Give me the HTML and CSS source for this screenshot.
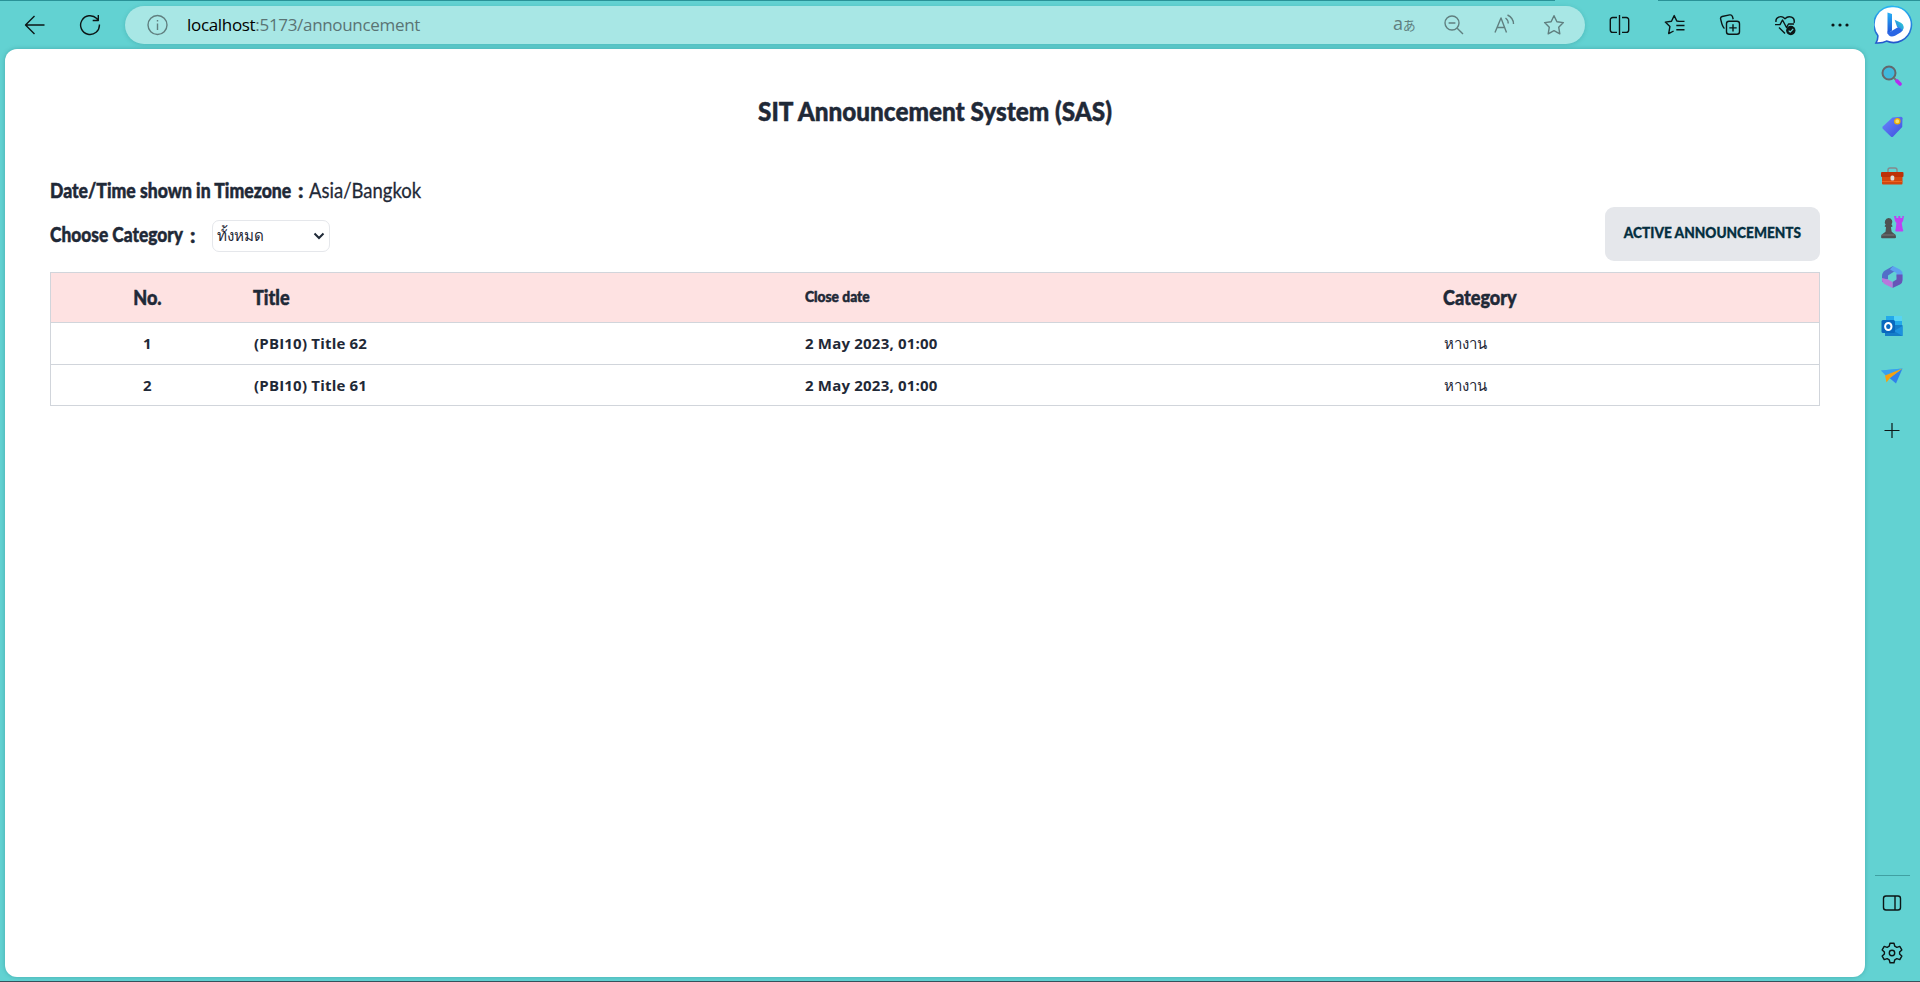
FILE: index.html
```html
<!DOCTYPE html>
<html lang="en">
<head>
<meta charset="utf-8">
<title>SIT Announcement System (SAS)</title>
<link rel="stylesheet" href="styles.css">
</head>
<body>
<div class="browser">
  <header class="toolbar">
    <div class="tab-edge"><i class="edge-left"></i><i class="edge-right"></i></div>
    <svg class="icon back" viewBox="0 0 22 22"><path d="M20.5 11H1.5M10.5 2L1.5 11l9 9"/></svg>
    <svg class="icon reload" viewBox="0 0 22 22"><path d="M20.4 10.5A9.4 9.4 0 1 1 17.8 4.6L19 6M19.3 1v5.5h-5.6"/></svg>
    <div class="address">
      <svg class="icon muted" viewBox="0 0 22 22"><circle cx="11.500" cy="11" r="9.5"/><path d="M11.500 9.5V16M11.500 6v1.6"/></svg>
      <div class="url"><b>localhost</b>:5173/announcement</div>
      <div class="address-actions">
        <div class="translate">a<span>あ</span></div>
        <svg class="icon muted" viewBox="0 0 22 22"><circle cx="9" cy="9" r="7"/><path d="M14.2 14.2l5.8 5.8M5.6 9h6.8"/></svg>
        <svg class="icon muted" viewBox="0 0 22 22"><path d="M2 18.500L8 4l5.500 14.500M4.300 13.500h7.200M12.500 4c2 1.400 2.700 3.200 2.700 5.500M14.500 1c4 2 6 5 6 9"/></svg>
        <svg class="icon muted" viewBox="0 0 22 22"><path d="M11 1.700l2.900 6 6.500.9-4.700 4.600 1.100 6.600L11 16.700l-5.800 3.100 1.100-6.600L1.600 8.600l6.500-.9z"/></svg>
      </div>
    </div>
    <div class="tools">
      <svg class="icon" viewBox="0 0 22 22"><path d="M10.500 1v20M8 3.500H3.700A2.400 2.400 0 0 0 1.300 6v10a2.400 2.400 0 0 0 2.400 2.400H8M13 3.500h4.300A2.400 2.400 0 0 1 19.700 6v10a2.400 2.400 0 0 1-2.400 2.400H13"/></svg>
      <svg class="icon" viewBox="0 0 22 22"><path d="M15 7.400L12.800 7 10.200 1.600 7.500 7.200l-6.200.9 4.600 4.500-1.200 7 4.900-2.600M14 7.400h6.500M12.300 11.500h8.200M12.300 15.700h8.200"/></svg>
      <svg class="icon" viewBox="0 0 22 22"><path d="M5.500 14.500C3 13 2 6 1.500 4.500c0-1.200.7-1.700 1.600-2L10.700.9c1.500-.2 2.300.4 2.700 1.500l.8 2.900"/><rect x="7.500" y="7.300" width="13" height="13" rx="2.500"/><path d="M14 10.200v7.400M10.300 13.900h7.400"/></svg>
      <svg class="icon" viewBox="0 0 22 22"><path d="M2 8C1.200 3.500 7 .5 11 4.800 15 .5 21.500 3.500 20 9M1 10.600h5L8.500 6l4 7.500 2-3.500h5.500M5 13.500l6 6"/><circle class="solid" cx="16.800" cy="16.500" r="4.700"/><path class="tick" d="M14.700 16.700l1.500 1.500 3-3.200"/></svg>
      <svg class="icon" viewBox="0 0 22 22"><g class="solid"><circle cx="4" cy="11" r="1.600"/><circle cx="11" cy="11" r="1.600"/><circle cx="18" cy="11" r="1.600"/></g></svg>
    </div>
    <svg class="bing" viewBox="0 0 40 40">
      <defs>
        <linearGradient id="ring" x1="0" y1="0" x2="0" y2="1"><stop offset="0" stop-color="#27b5f0"/><stop offset="1" stop-color="#2456cc"/></linearGradient>
        <linearGradient id="bee" x1="0" y1="0" x2="0" y2="1"><stop offset="0" stop-color="#27b0f5"/><stop offset="1" stop-color="#1d50d6"/></linearGradient>
        <linearGradient id="bowl" x1="1" y1="0" x2="0" y2="1"><stop offset="0" stop-color="#2fe0cf"/><stop offset="1" stop-color="#2668ea"/></linearGradient>
      </defs>
      <path d="M20 1.500a18 18 0 1 1-7.500 34.600c-2.500 1.500-6.500 2-10.500 1.800 1.200-2 2-5 1.800-7.400A18 18 0 0 1 20 1.500z" fill="#fff" stroke="url(#ring)" stroke-width="1.600"/>
      <path d="M13.500 7.500l4.500 1.600v16.500l-4.500 3.400z" fill="url(#bee)"/>
      <path d="M13.500 25.500v1.300c0 4.500 4 5.700 7.500 3.900l5.500-3.200c3-2 3.400-5.200 2-8L18 25.800c-1.800 1-4.500 2-4.500-.3z" fill="#2a66e4"/>
      <path d="M20.600 14.700l5.800 2.700c3.600 1.900 4.200 5.800 1.700 8.600-.4-2-1.500-2.700-5-3.900z" fill="url(#bowl)"/>
    </svg>
  </header>

  <div class="body">
    <main class="page">
      <h1>SIT Announcement System (SAS)</h1>
      <p class="timezone"><span class="label tz-label"><span>Date/Time shown in Timezone</span></span><span class="label colon">:</span><span class="tz-value">Asia/Bangkok</span></p>
      <div class="controls">
        <div class="filter">
          <span class="label cat-label"><span>Choose Category</span></span><span class="label colon">:</span>
          <div class="select"><span class="choice">ทั้งหมด</span><svg viewBox="0 0 12 8"><path d="M1.500 1.500L6 6l4.500-4.500"/></svg></div>
        </div>
        <button class="active-button"><span>ACTIVE ANNOUNCEMENTS</span></button>
      </div>
      <div class="table">
        <div class="row head"><div class="num">No.</div><div class="h-title">Title</div><div class="h-date">Close date</div><div class="h-cat">Category</div></div>
        <div class="row"><div class="num">1</div><div class="name">(PBI10) Title 62</div><div class="date">2 May 2023, 01:00</div><div class="thai">หางาน</div></div>
        <div class="row"><div class="num">2</div><div class="name">(PBI10) Title 61</div><div class="date">2 May 2023, 01:00</div><div class="thai">หางาน</div></div>
      </div>
    </main>

    <aside class="sidebar">
      <svg viewBox="0 0 24 24"><path d="M14 13l6 6" stroke="#777" stroke-width="2"/><path d="M17 16l3 3" stroke="#b42df0" stroke-width="3.800" stroke-linecap="round"/><circle cx="9" cy="8" r="6.500" fill="#3fb9dc" stroke="#65676b" stroke-width="2"/></svg>
      <svg viewBox="0 0 24 24"><defs><linearGradient id="tag" x1="0" y1="0" x2="1" y2="1"><stop offset="0" stop-color="#6a86ff"/><stop offset="1" stop-color="#3e50dc"/></linearGradient></defs><path d="M12.500 2.500L21 1.800q1.500 0 1.500 1.500l-.3 8.700-9 9.500q-1.200 1-2.400 0l-8-7.700q-1-1.200 0-2.400z" fill="url(#tag)"/><circle cx="17.300" cy="6.300" r="2.600" fill="#f7dc6c" stroke="#efb000" stroke-width="1.300"/></svg>
      <svg viewBox="0 0 24 24"><path d="M8 8V5q0-2 2-2h5q2 0 2 2v3" fill="none" stroke="#85898c" stroke-width="1.400"/><rect x="2" y="10" width="20.500" height="9.500" rx="1" fill="#d2460f"/><rect x="1" y="7" width="22.500" height="5" rx="1" fill="#bd3008"/><path d="M2 16.500h20.500" stroke="#eb6421"/><rect x="10.500" y="10.500" width="3.800" height="5" rx="1.500" fill="#ddd"/></svg>
      <svg viewBox="0 0 24 24"><path d="M14 1h2.300v2h2V1h2v2h2V1H24l-1 5-1.300 2 1 6q1.300 2.500-.5 2.500h-6q-1.500 0-.5-2.500l.7-6-1.400-2z" fill="#bd42f2"/><path d="M8.500 3a4 4 0 0 1 3 6.500l1.200 1.700-1.800 1 .8 4.500 3.800 3q1.200 3.500-.5 3.500H2q-1.500 0-.5-3.500l4-3 .5-4.500-1.500-1 1.200-1.700A4 4 0 0 1 8.500 3z" fill="#4e5152"/><path d="M2 20h12.500" stroke="#777"/></svg>
      <svg viewBox="0 0 24 24"><path d="M13 1l-8 4.500Q2 7.500 2 11v6l6-3v-3.500L15 6z" fill="#526fc8"/><path d="M13 1l7 3.500q2.500 1.500 2.500 5V15l-6-3.500V8L10 4.500z" fill="#5ca1f0"/><path d="M22.500 9.500v6q0 2.500-2.500 4l-7.500 3.500V17l4-2.500v-5z" fill="#6754b7"/><path d="M2 13l6 1.500 4.500 2.500v6L4.500 19Q2 17.500 2 15z" fill="#b878dc"/></svg>
      <svg viewBox="0 0 24 24"><path d="M6 1h15q1 0 1 1v10H6z" fill="#23a9ea"/><path d="M14 1h8v5h-8z" fill="#56d4f4"/><path d="M5 10h17.500v11H5z" fill="#147cc8"/><path d="M14 16l8.500-5v10z" fill="#1d91e0"/><rect x="1.500" y="5" width="13.500" height="13" rx="1.500" fill="#0868be"/><ellipse cx="8.300" cy="11.500" rx="3.200" ry="3.600" fill="none" stroke="#fff" stroke-width="2"/></svg>
      <svg viewBox="0 0 24 24"><path d="M1 5.500l21.500-2L9.500 11z" fill="#42a7f4"/><path d="M22.500 3.500L16 18.500 9.500 13z" fill="#2f82ec"/><path d="M1 5.500L22.500 3.500 7 12z" fill="#39a0ef"/><path d="M5 10.500l17.500-7L10 13 6.500 17.500z" fill="#f5a111"/></svg>
      <svg class="add" viewBox="0 0 24 24"><path d="M12 4v15M4.500 11.500h15"/></svg>
      <i class="spacer"></i>
      <i class="divider"></i>
      <svg class="line panel" viewBox="0 0 24 24"><rect x="3.500" y="5" width="17" height="14" rx="2.500"/><path d="M15 5v14"/></svg>
      <svg class="line gear" viewBox="0 0 24 24"><path d="M10 2.200h4l.8 3 2 1.100 3-.9 2 3.500-2.200 2.100v2l2.200 2.100-2 3.500-3-.9-2 1.100-.8 3h-4l-.8-3-2-1.100-3 .9-2-3.500L4.400 13v-2L2.200 8.900l2-3.500 3 .9 2-1.100z"/><circle cx="12" cy="12" r="2.700"/></svg>
    </aside>
  </div>
</div>
</body>
</html>
```

FILE: styles.css
```css
* { box-sizing: border-box; }
body { margin: 0; }
.browser {
  display: flex; flex-direction: column;
  width: 1920px; height: 982px;
  background: #62d2d2;
  border-bottom: 1px solid #36525c;
  font-family: "Open Sans", "Noto Sans CJK JP", sans-serif;
  color: #1f2937;
}
.toolbar {
  position: relative;
  display: flex; align-items: center;
  height: 49px; padding: 1px 6px 0 24px;
}
.tab-edge { position: absolute; top: 0; left: 0; width: 100%; display: flex; justify-content: space-between; }
.tab-edge i { height: 1px; background: #2a9297; }
.edge-left { width: 1555px; }
.edge-right { width: 262px; }
.icon { width: 22px; height: 22px; flex: none; fill: none; stroke: #0c1616; stroke-width: 1.4; stroke-linejoin: round; }
.muted { stroke: #607f7f; }
.icon .solid { fill: #0c1616; stroke: none; }
.icon .tick { stroke: #62d2d2; stroke-width: 1.2; }
.reload { margin-left: 33px; }
.address {
  display: flex; align-items: center;
  width: 1460px; height: 38px; margin-left: 24px; padding: 0 20px 0 21px;
  border-radius: 19px; background: #a8e7e5;
  box-shadow: 0 1px 4px rgba(20, 110, 115, .25);
}
.url { margin-left: 19px; padding-bottom: 1px; font-size: 17px; font-weight: 400; line-height: 24px; color: #5a7474; white-space: nowrap; letter-spacing: -.32px; }
.url b { font-weight: 400; color: #000; }
.address-actions { display: flex; align-items: center; gap: 28px; margin-left: auto; }
.translate { width: 22px; font-size: 18px; line-height: 22px; padding-bottom: 2px; color: #607f7f; white-space: nowrap; letter-spacing: -.3px; }
.translate span { font-size: 13px; }
.tools { display: flex; gap: 33px; margin-left: 24px; }
.bing { width: 40px; height: 40px; margin-left: auto; }

.body { display: flex; flex: 1; min-height: 0; }
.page {
  width: 1860px; height: 928px; margin-left: 5px; padding: 43px 45px 0;
  border-radius: 12px; background: #fff;
  box-shadow: 0 0 4px rgba(15, 100, 105, .35);
}
h1, .label, .tz-value, .active-button, .head { font-family: Lato, "Open Sans", sans-serif; }
h1, .label, .head { -webkit-text-stroke: .5px currentColor; }
h1 { margin: 0; text-align: center; font-size: 27px; line-height: 38px; height: 40px; font-weight: 900; transform: scaleX(.9); }
.timezone { display: flex; margin: 43px 0 0; font-size: 21px; line-height: 29px; height: 28px; white-space: nowrap; }
.label { font-weight: 900; font-size: 21px; line-height: 29px; white-space: nowrap; }
.cat-label { line-height: 28px; }
.label span, .active-button span { display: inline-block; transform-origin: left; }
.tz-label { width: 248px; }
.tz-label span { transform: scaleX(.838); }
.cat-label { width: 140px; }
.cat-label span { transform: scaleX(.825); }
.tz-value { margin-left: 5px; transform: scaleX(.88); transform-origin: left; -webkit-text-stroke: .3px currentColor; }
.colon { width: 6px; }
.controls { display: flex; justify-content: space-between; align-items: center; height: 54px; margin-top: 4px; }
.filter { display: flex; align-items: center; }
.select {
  display: flex; align-items: center; justify-content: space-between;
  width: 118px; height: 32px; margin: 3px 0 0 16px; padding: 0 4px 0 4px;
  border: 1px solid #e5e7eb; border-radius: 7px; font-size: 15.200px;
}
.select svg { width: 12px; height: 8px; fill: none; stroke: #1f2937; stroke-width: 2; }
.active-button {
  width: 215px; height: 54px; padding: 0 0 4px; border: 0; border-radius: 9px;
  background: #e5e7eb; color: #042f40; font-size: 15px; font-weight: 900; white-space: nowrap;
  -webkit-text-stroke: .3px currentColor;
}
.active-button span { transform: scaleX(.91); transform-origin: center; }
.table { margin-top: 11px; border: 1px solid #d1d5db; }
.row {
  display: grid; grid-template-columns: 202px 551px 639px 1fr; align-items: center;
  height: 42px; padding-bottom: 1px; border-top: 1px solid #d1d5db;
  font-size: 15px; font-weight: 700; line-height: 24px; letter-spacing: .2px;
}
.row:last-child { height: 41px; padding-bottom: 0; }
.row .name { padding-left: 1px; }
.row .date { padding-left: 1px; }
.row .thai { padding-left: 1px; font-size: 15px; font-weight: 500; letter-spacing: 0; }
.row.head { height: 49px; padding-bottom: 2px; border-top: 0; background: #fee2e2; font-size: 21px; font-weight: 900; letter-spacing: 0; }
.num { padding-right: 9px; text-align: center; }
.head > div { transform-origin: left; }
.head .num { transform: scaleX(.86); transform-origin: 96px center; }
.h-title, .h-cat { transform: scaleX(.86); }
.head .h-date { padding: 0 0 2px 1px; font-size: 15px; transform: scaleX(.92); }

.sidebar { display: flex; flex-direction: column; align-items: center; width: 55px; padding: 16px 1px 0 0; }
.sidebar svg { width: 24px; height: 24px; margin-bottom: 26px; flex: none; fill: none; }
.sidebar .add { margin-top: 4px; margin-bottom: 0; stroke: #0c1616; stroke-width: 1.200; }
.spacer { flex: 1; }
.divider { width: 35px; height: 1px; margin-bottom: 15px; background: #40a0a2; }
.sidebar .line { stroke: #0c1616; stroke-width: 1.400; stroke-linejoin: round; }
.sidebar .gear { margin-bottom: 16px; }
```
